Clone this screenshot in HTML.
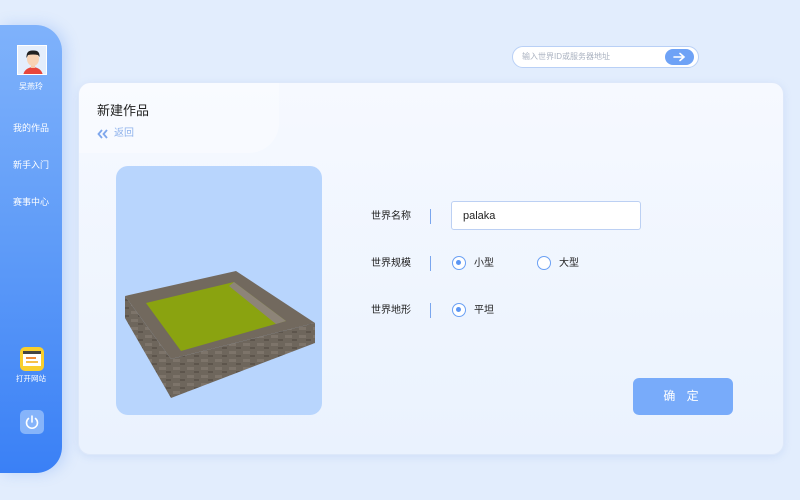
<!DOCTYPE html>
<html><head><meta charset="utf-8"><style>
*{margin:0;padding:0;box-sizing:border-box}
body{width:800px;height:500px;background:#e2edfd;font-family:"Liberation Sans","Noto Sans CJK SC",sans-serif;position:relative;overflow:hidden}
.side{position:absolute;left:0;top:25px;width:62px;height:448px;border-radius:0 26px 26px 0;background:linear-gradient(180deg,#7fb2fb 0%,#5e9bf8 50%,#3a80f6 100%);box-shadow:4px 0 14px rgba(80,140,240,.25)}
.side .t{position:absolute;width:62px;text-align:center;color:#fff;font-size:9px;line-height:1}
.avatar{position:absolute;left:17px;top:20px;width:30px;height:30px;border:1px solid #fff;background:#d9e8fb;overflow:hidden}
.panel{position:absolute;left:78px;top:82px;width:706px;height:373px;border-radius:12px;background:linear-gradient(180deg,#f6f9ff,#eaf2fe);box-shadow:0 2px 8px rgba(120,160,230,.18);border:1px solid #dde8fa}
.lbl{position:absolute;font-size:10px;color:#222;line-height:1}
.bar{position:absolute;width:1px;height:15px;background:#7aa6ee}
.radio{position:absolute;width:14px;height:14px;border-radius:50%;border:1.5px solid #6aa0f4;background:#fff}
.radio.on::after{content:"";position:absolute;left:3px;top:3px;width:5px;height:5px;border-radius:50%;background:#5b96f4}
</style></head><body>
<div class="side">
  <div class="avatar"><svg width="30" height="30"><rect width="30" height="30" fill="#e4eefc"/><path d="M5 30 Q6 22 15 21 Q24 22 25 30Z" fill="#e8463b"/><rect x="13" y="17" width="4" height="5" fill="#f7c9a8"/><ellipse cx="15" cy="13" rx="6" ry="7" fill="#f9d3b4"/><path d="M8.5 12 Q8 4 15 4.5 Q22 4 21.5 11 L20 9 Q15 8 10 9Z" fill="#222"/></svg></div>
  <div class="t" style="top:58px;font-size:8px">吴燕玲</div>
  <div class="t" style="top:99px">我的作品</div>
  <div class="t" style="top:136px">新手入门</div>
  <div class="t" style="top:173px">赛事中心</div>
  <div style="position:absolute;left:20px;top:322px;width:24px;height:24px;border-radius:5px;background:#f9cf2c"><div style="position:absolute;left:3px;top:4px;width:18px;height:15px;background:#fff;border-top:3px solid #444"></div><div style="position:absolute;left:6px;top:10px;width:10px;height:2px;background:#f08a3a"></div><div style="position:absolute;left:6px;top:14px;width:12px;height:2px;background:#f6c048"></div></div>
  <div class="t" style="top:350px;font-size:7.5px">打开网站</div>
  <div style="position:absolute;left:20px;top:385px;width:24px;height:24px;border-radius:5px;background:#86b4fa"><svg width="24" height="24"><path d="M8.5 8.5 A5.5 5.5 0 1 0 15.5 8.5" fill="none" stroke="#fff" stroke-width="1.6" stroke-linecap="round"/><path d="M12 6 V12" stroke="#fff" stroke-width="1.6" stroke-linecap="round"/></svg></div>
</div>
<div style="position:absolute;left:512px;top:46px;width:187px;height:22px;border-radius:11px;background:#fff;border:1px solid #b9d0f6"><span style="position:absolute;left:9px;top:6px;font-size:8px;line-height:1;color:#aab2c0">输入世界ID或服务器地址</span><div style="position:absolute;right:4px;top:2px;width:29px;height:16px;border-radius:8px;background:#6ea2f6"><svg width="29" height="16"><path d="M9 8 H19 M15 4.5 L19 8 L15 11.5" fill="none" stroke="#fff" stroke-width="1.6" stroke-linecap="round"/></svg></div></div>
<div class="panel">
  <div style="position:absolute;left:0;top:0;width:200px;height:70px;border-radius:12px 0 30px 0;background:rgba(255,255,255,.35)"></div>
  <div style="position:absolute;left:18px;top:21px;font-size:13px;line-height:1;color:#222">新建作品</div>
  <svg style="position:absolute;left:18px;top:46px" width="12" height="10"><path d="M5 1 L1.5 5 L5 9 M10 1 L6.5 5 L10 9" fill="none" stroke="#7ea6ec" stroke-width="1.8"/></svg>
  <div style="position:absolute;left:35px;top:46px;font-size:10px;line-height:1;color:#8fb2ec">返回</div>
  <div style="position:absolute;left:37px;top:83px;width:206px;height:249px;border-radius:12px;background:#b8d5fd">
    <svg width="206" height="249" style="position:absolute;left:0;top:0">
      <defs><pattern id="st" width="14" height="8" patternUnits="userSpaceOnUse"><rect width="14" height="8" fill="#6e665c"/><rect x="1" y="1" width="7" height="3" fill="#7d746a"/><rect x="8" y="5" width="5" height="2" fill="#5d554c"/></pattern></defs>
      <polygon points="9,130 9,152 55,232 55,193" fill="url(#st)"/>
      <polygon points="55,193 55,232 199,177 199,157" fill="url(#st)"/>
      <polygon points="9,130 120,105 199,157 55,193" fill="#72695e"/>
      <polygon points="30,137 118,116 170,155 65,185" fill="#8aa310"/>
      <polygon points="118,116 170,155 160,158 113,120" fill="#8d8478"/>
    </svg>
  </div>
  <div class="lbl" style="left:292px;top:129px">世界名称</div><div class="bar" style="left:351px;top:126px"></div>
  <div style="position:absolute;left:372px;top:118px;width:190px;height:29px;background:#fff;border:1px solid #bcd0f3;border-radius:3px;font-size:11px;line-height:1;color:#222;padding:9px 0 0 11px">palaka</div>
  <div class="lbl" style="left:292px;top:176px">世界规模</div><div class="bar" style="left:351px;top:173px"></div>
  <div class="radio on" style="left:373px;top:173px"></div><div class="lbl" style="left:395px;top:176px">小型</div>
  <div class="radio" style="left:458px;top:173px"></div><div class="lbl" style="left:480px;top:176px">大型</div>
  <div class="lbl" style="left:292px;top:223px">世界地形</div><div class="bar" style="left:351px;top:220px"></div>
  <div class="radio on" style="left:373px;top:220px"></div><div class="lbl" style="left:395px;top:223px">平坦</div>
  <div style="position:absolute;left:554px;top:295px;width:100px;height:37px;border-radius:6px;background:#78abfa;color:#fff;font-size:12px;text-align:center;line-height:37px;letter-spacing:4px">确 定</div>
</div>
</body></html>
